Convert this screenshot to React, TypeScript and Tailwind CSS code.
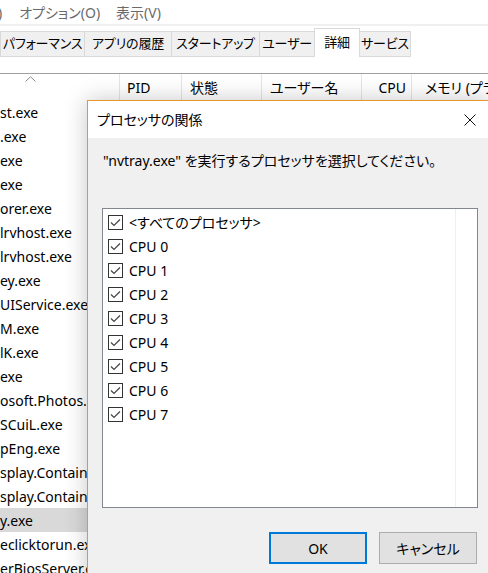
import type { ReactNode } from "react";

const processes = [
  "st.exe",
  ".exe",
  "exe",
  "exe",
  "orer.exe",
  "lrvhost.exe",
  "lrvhost.exe",
  "ey.exe",
  "UIService.exe",
  "M.exe",
  "lK.exe",
  "exe",
  "osoft.Photos.exe",
  "SCuiL.exe",
  "pEng.exe",
  "splay.Container.exe",
  "splay.Container.exe",
  "y.exe",
  "eclicktorun.exe",
  "erBiosServer.exe",
];

const tabs = ["パフォーマンス", "アプリの履歴", "スタートアップ", "ユーザー", "詳細", "サービス"];

const cpus = ["<すべてのプロセッサ>", "CPU 0", "CPU 1", "CPU 2", "CPU 3", "CPU 4", "CPU 5", "CPU 6", "CPU 7"];

function HeaderCell({ w, children, className = "" }: { w: string; children?: ReactNode; className?: string }) {
  return (
    <div className={`${w} h-full flex items-center border-r border-[#e5e5e5] shrink-0 ${className}`}>
      {children}
    </div>
  );
}

function CheckBox() {
  return (
    <div className="w-[15px] h-[15px] border border-[#333333] bg-white flex items-center justify-center shrink-0">
      <svg width="11" height="9" viewBox="0 0 11 9" fill="none">
        <path d="M1 4.5 L4 7.5 L10 1.5" stroke="#444444" strokeWidth="1.2" />
      </svg>
    </div>
  );
}

export default function App() {
  return (
    <div className="relative w-[488px] h-[573px] overflow-hidden bg-white text-black text-[14px] font-['Noto_Sans','Noto_Sans_CJK_JP',sans-serif] [font-feature-settings:'palt']">
      {/* menu */}
      <div className="h-[24px] flex items-center text-[#6a6a6a] whitespace-nowrap">
        <span className="-ml-[2px]">)</span>
        <span className="ml-[17px]">オプション(O)</span>
        <span className="ml-[16px]">表示(V)</span>
      </div>
      <div className="h-[2px] bg-[#f0f0f0]" />

      {/* tabs */}
      <div className="h-[31px] flex items-end whitespace-nowrap text-[13px] tracking-[-0.2px]">
        {tabs.map((t, i) => {
          const widths = ["w-[85px]", "w-[88px]", "w-[89px]", "w-[56px]", "w-[46px]", "w-[52px]"];
          const active = t === "詳細";
          return (
            <div
              key={t}
              className={`${widths[i]} ${
                active ? "h-[29px] bg-white border-b-0" : "h-[26px] bg-[#f0f0f0]"
              } border border-[#d9d9d9] -ml-px first:ml-0 flex items-center shrink-0 ${
                i === 0 ? "justify-start pl-[2px]" : "justify-center"
              }`}
            >
              {t}
            </div>
          );
        })}
      </div>

      <div className="h-[16px]" />

      {/* column header */}
      <div className="relative h-[27px] border-t border-[#a0a0a0] flex whitespace-nowrap">
        <HeaderCell w="w-[120px]">
          <svg className="absolute left-[25px] top-[2px]" width="11" height="6" viewBox="0 0 11 6" fill="none">
            <path d="M0.5 5.5 L5.5 0.8 L10.5 5.5" stroke="#888888" strokeWidth="1" />
          </svg>
        </HeaderCell>
        <HeaderCell w="w-[62px]" className="pl-[7px]">PID</HeaderCell>
        <HeaderCell w="w-[80px]" className="pl-[8px]">状態</HeaderCell>
        <HeaderCell w="w-[100px]" className="pl-[8px]">ユーザー名</HeaderCell>
        <HeaderCell w="w-[50px]" className="justify-end pr-[5px]">CPU</HeaderCell>
        <div className="pl-[13px] flex items-center">メモリ (プライベート)</div>
      </div>

      {/* process list */}
      <div className="flex flex-col whitespace-nowrap">
        {processes.map((p, i) => (
          <div key={i} className={`h-[24px] flex items-center ${i === 17 ? "bg-[#d9d9d9]" : ""}`}>
            {p}
          </div>
        ))}
      </div>

      {/* dialog */}
      <div className="absolute left-[87px] top-[100px] w-[405px] h-[500px] border border-[#e8962a] bg-[#f0f0f0] shadow-[0_0_22px_rgba(0,0,0,0.22)] flex flex-col">
        <div className="h-[37px] bg-white flex items-center justify-between shrink-0">
          <span className="pl-[9px]">プロセッサの関係</span>
          <div className="w-[42px] h-full flex items-center justify-center">
            <svg width="12" height="12" viewBox="0 0 12 12" fill="none">
              <path d="M0.5 0.5 L11.5 11.5 M11.5 0.5 L0.5 11.5" stroke="#111111" strokeWidth="1" />
            </svg>
          </div>
        </div>

        <div className="pl-[14px] pt-[12px] flex flex-col">
          <div className="h-[20px] flex items-center pl-[1px] whitespace-nowrap">
            "nvtray.exe" を実行するプロセッサを選択してください。
          </div>

          <div className="relative mt-[38px] w-[376px] h-[300px] border border-[#828790] bg-white pt-[1px] pl-[5px]">
            <div className="absolute left-[352px] top-0 bottom-0 w-px bg-[#e8f0fa]" />
            {cpus.map((c) => (
              <div key={c} className="h-[24px] flex items-center gap-[6px] whitespace-nowrap">
                <CheckBox />
                <span>{c}</span>
              </div>
            ))}
          </div>

          <div className="mt-[24px] flex gap-[12px] pl-[167px]">
            <button className="w-[98px] h-[32px] bg-[#e1e1e1] border-2 border-[#0078d7] flex items-center justify-center">
              OK
            </button>
            <button className="w-[98px] h-[32px] bg-[#e1e1e1] border border-[#adadad] flex items-center justify-center">
              キャンセル
            </button>
          </div>
        </div>
      </div>
    </div>
  );
}
